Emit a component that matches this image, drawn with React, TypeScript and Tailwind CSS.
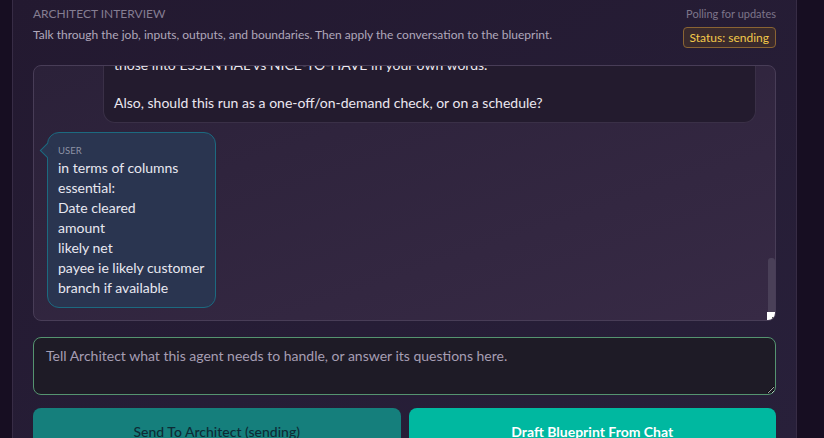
import React from "react";

const userLines = [
    "in terms of columns",
    "essential:",
    "Date cleared",
    "amount",
    "likely net",
    "payee ie likely customer",
    "branch if available",
];

function AssistantBubble() {
    return (
        <div className="ml-[56px] mr-[-1px] shrink-0 rounded-b-[12px] border border-t-0 border-[#3a3047] bg-[#231b2e] px-[10px] pb-[9px] text-[14px] leading-[21px] text-[#ebe7f0]">
            <p>Before I draft the blueprint, tell me which of those columns are a must and which are optional. Sort</p>
            <p>those into ESSENTIAL vs NICE-TO-HAVE in your own words.</p>
            <div className="h-[17px]" />
            <p>Also, should this run as a one-off/on-demand check, or on a schedule?</p>
        </div>
    );
}

function UserBubble() {
    return (
        <div className="relative w-[169px] shrink-0 rounded-[12px] border border-[#1c6a80] bg-[#2a3550] pl-[10px] pt-[11px] pb-[9px]">
            <div className="absolute left-[-6px] top-[12px] h-[11px] w-[11px] rotate-45 border-b border-l border-[#1c6a80] bg-[#2a3550]" />
            <div className="text-[9.5px] leading-[14px] uppercase text-[#8e93a6]">User</div>
            {userLines.map((line) => (
                <div key={line} className="text-[14px] leading-[20px] text-[#e8e8f0]">
                    {line}
                </div>
            ))}
        </div>
    );
}

export default function App() {
    return (
        <div
            className="flex h-[438px] w-[824px] overflow-hidden bg-[#170e22]"
            style={{ fontFamily: "Lato, 'Open Sans', sans-serif" }}
        >
            <div className="w-[12px] shrink-0" />
            <div className="flex w-[785px] shrink-0 flex-col border-x border-[#372c45] bg-gradient-to-br from-[#231930] to-[#28203a] px-[20px] pt-[6px]">
                {/* header */}
                <div className="flex shrink-0 justify-between">
                    <div>
                        <div className="text-[12px] leading-[16px] uppercase text-[#857d92]">Architect Interview</div>
                        <div className="mt-[5px] text-[12px] leading-[16px] text-[#b0a8bb]">
                            Talk through the job, inputs, outputs, and boundaries. Then apply the conversation to the blueprint.
                        </div>
                    </div>
                    <div className="flex flex-col items-end">
                        <div className="text-[11px] leading-[16px] text-[#7d758a]">Polling for updates</div>
                        <div className="mt-[5px] rounded-[4px] border border-[#8a6433] bg-[#3a2a2d] px-[6px] py-[2px] text-[12px] leading-[15px] text-[#f3c94a]">
                            Status: sending
                        </div>
                    </div>
                </div>

                {/* conversation */}
                <div className="relative mt-[17px] flex h-[256px] shrink-0 flex-col justify-end gap-[9px] overflow-hidden rounded-[8px] border border-[#483d57] bg-gradient-to-br from-[#2b2139] to-[#372a45] pb-[12px] pl-[13px] pr-[20px]">
                    <AssistantBubble />
                    <UserBubble />
                    <div className="absolute right-0 top-[192px] h-[56px] w-[7px] rounded-t-[3px] bg-[#4a4058]" />
                    <div className="absolute bottom-0 right-0 flex h-[8px] w-[8px] items-end justify-end bg-white p-[1px]">
                        <div className="h-[2px] w-[2px] bg-[#555]" />
                    </div>
                </div>

                {/* composer */}
                <textarea
                    rows={2}
                    placeholder="Tell Architect what this agent needs to handle, or answer its questions here."
                    className="mt-[16px] h-[58px] w-full shrink-0 resize-y rounded-[8px] border border-[#559470] bg-[#1e1b26] px-[12px] py-[8px] text-[14px] leading-[20px] text-[#e8e4ee] outline-none placeholder:text-[#a69eb3]"
                />

                <div className="mt-[13px] grid shrink-0 grid-cols-2 gap-[8px]">
                    <button className="h-[46px] rounded-[8px] bg-[#157f7c] text-[14px] font-medium text-[#0d2b35]">
                        Send To Architect (sending)
                    </button>
                    <button className="h-[46px] rounded-[8px] bg-[#00b8a0] text-[14px] font-bold text-white">
                        Draft Blueprint From Chat
                    </button>
                </div>
            </div>
            <div className="flex-1 bg-[#170e22]" />
        </div>
    );
}
